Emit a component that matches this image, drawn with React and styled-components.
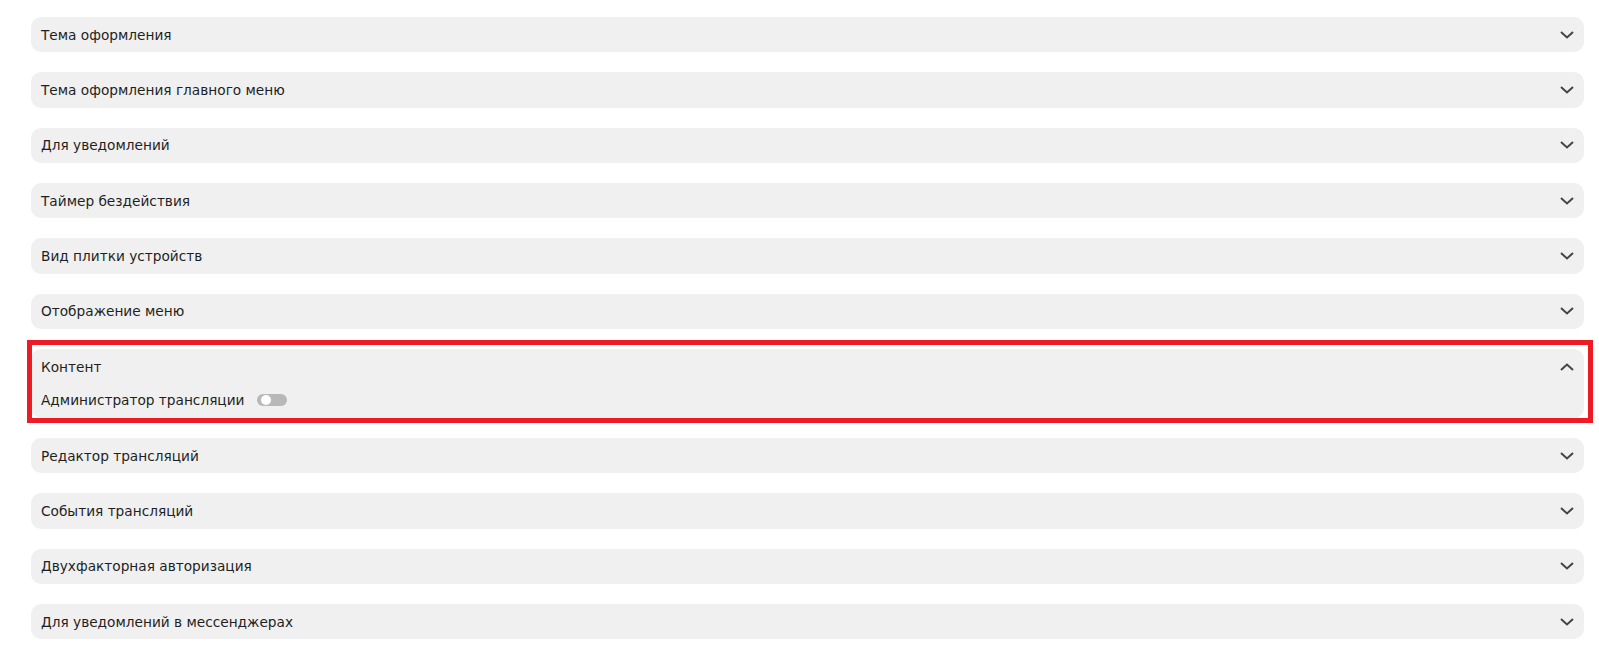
import { useState } from "react";
import styled, { createGlobalStyle } from "styled-components";

const GlobalStyle = createGlobalStyle`
  html, body {
    margin: 0;
    padding: 0;
    background: #ffffff;
  }

  body {
    font-family: "DejaVu Sans", "Noto Sans", sans-serif;
    color: #1f1f1f;
  }
`;

const List = styled.div`
  display: flex;
  flex-direction: column;
  gap: 20px;
  padding: 17px 15px 0 31px;
`;

const Item = styled.section`
  position: relative;
  display: flex;
  flex-direction: column;
  background-color: #f0f0f0;
  border-radius: 10px;

  ${({ $highlight }) =>
    $highlight &&
    `
    &::after {
      content: "";
      position: absolute;
      top: -9px;
      left: -4px;
      right: -9px;
      bottom: -5px;
      border: 5px solid #ed1c24;
      pointer-events: none;
    }
  `}
`;

const Header = styled.button`
  display: flex;
  justify-content: space-between;
  align-items: center;
  height: 35.33px;
  padding: 0 10px 0 10px;
  border: none;
  background: transparent;
  font-family: inherit;
  font-size: 13.7px;
  color: #1f1f1f;
  text-align: left;
  cursor: pointer;
`;

const Body = styled.div`
  display: flex;
  align-items: center;
  gap: 13px;
  height: 33.67px;
  padding: 0 10px 2px 10px;
  box-sizing: border-box;
  font-size: 13.7px;
`;

const Switch = styled.button`
  position: relative;
  width: 30px;
  height: 12px;
  padding: 0;
  border: none;
  border-radius: 6px;
  background-color: ${({ $on }) => ($on ? "#ed1c24" : "#b8b8b8")};
  cursor: pointer;

  &::before {
    content: "";
    position: absolute;
    top: 1px;
    left: ${({ $on }) => ($on ? "16px" : "4px")};
    width: 10px;
    height: 10px;
    border-radius: 50%;
    background-color: #ffffff;
  }
`;

function Chevron({ up }) {
  return (
    <svg width="14" height="8" viewBox="0 0 14 8" fill="none">
      <polyline
        points={up ? "1,7 7,1.5 13,7" : "1,1 7,6.5 13,1"}
        stroke="#444444"
        strokeWidth="2"
      />
    </svg>
  );
}

const sections = [
  "Тема оформления",
  "Тема оформления главного меню",
  "Для уведомлений",
  "Таймер бездействия",
  "Вид плитки устройств",
  "Отображение меню",
  "Контент",
  "Редактор трансляций",
  "События трансляций",
  "Двухфакторная авторизация",
  "Для уведомлений в мессенджерах",
];

export default function App() {
  const [open, setOpen] = useState("Контент");
  const [broadcastAdmin, setBroadcastAdmin] = useState(false);

  return (
    <>
      <GlobalStyle />
      <List>
        {sections.map((title) => {
          const isOpen = open === title;
          return (
            <Item key={title} $highlight={isOpen}>
              <Header onClick={() => setOpen(isOpen ? null : title)}>
                {title}
                <Chevron up={isOpen} />
              </Header>
              {isOpen && (
                <Body>
                  Администратор трансляции
                  <Switch
                    $on={broadcastAdmin}
                    onClick={() => setBroadcastAdmin(!broadcastAdmin)}
                    aria-label="Администратор трансляции"
                  />
                </Body>
              )}
            </Item>
          );
        })}
      </List>
    </>
  );
}
